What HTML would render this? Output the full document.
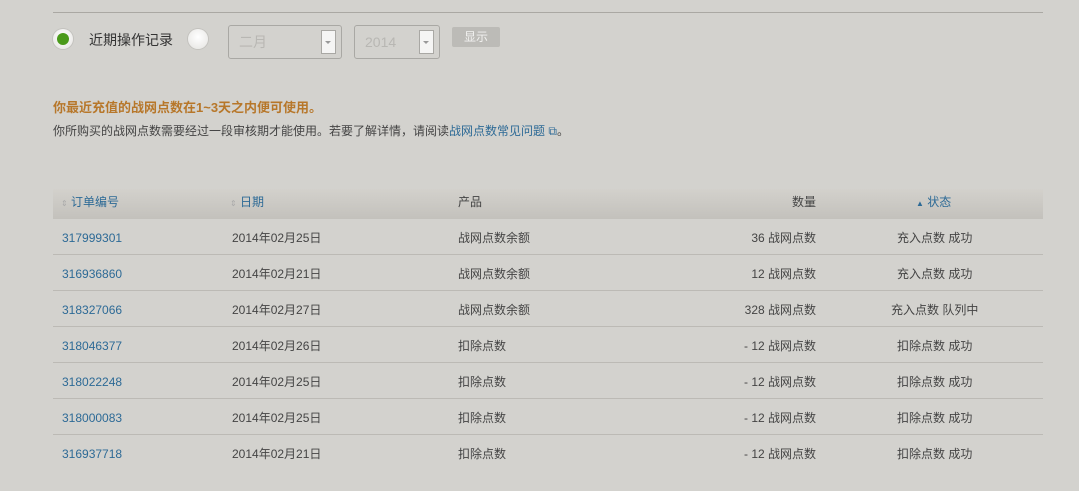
<!DOCTYPE html>
<html><head><meta charset="utf-8"><style>
body{margin:0;width:1079px;height:491px;background:#d3d2ce;font-family:"Liberation Sans","Noto Sans CJK SC",sans-serif;font-size:12px;color:#444;position:relative;overflow:hidden}
.a{position:absolute;white-space:nowrap;line-height:14px}
.a *{line-height:14px}
.hr{position:absolute;left:53px;top:12px;width:990px;height:1px;background:#aaa8a3}
.radio{position:absolute;width:20px;height:20px;border-radius:50%;background:radial-gradient(circle at 50% 40%,#fff,#e4e3e0);box-shadow:0 0 0 1px #c3c2be}
.dot{position:absolute;left:4px;top:4px;width:12px;height:12px;border-radius:50%;background:#4a9a1a}
.sel{position:absolute;height:34px;border:1px solid #a9a8a4;border-radius:3px;box-sizing:border-box;color:#b8b7b3;font-size:14px;line-height:32px;padding-left:10px}
.arr{position:absolute;right:5px;top:4px;width:15px;height:24px;background:#f5f5f4;border:1px solid #a9a8a4;box-sizing:border-box}
.arr:after{content:"";position:absolute;left:3px;top:10px;border-left:3px solid transparent;border-right:3px solid transparent;border-top:3px solid #999}
.th{position:absolute;left:53px;top:189px;width:990px;height:30px;background:linear-gradient(#d3d1cc,#c3c1bc)}
.row{position:absolute;left:53px;width:990px;height:1px;background:#bcbab5}
.lk{color:#2d6a96}
</style></head><body>
<div class="hr"></div>
<div class="radio" style="left:53px;top:29px"><div class="dot"></div></div>
<div class="a" style="left:89px;top:33px;font-size:14px;color:#333">近期操作记录</div>
<div class="radio" style="left:188px;top:29px"></div>
<div class="sel" style="left:228px;top:25px;width:114px">二月<div class="arr"></div></div>
<div class="sel" style="left:354px;top:25px;width:86px">2014<div class="arr"></div></div>
<div class="a" style="left:452px;top:27px;width:48px;height:20px;background:#bcbbb7;border-radius:2px;color:#f2f2f0;text-align:center;line-height:20px;font-size:12px">显示</div>
<div class="a" style="left:53px;top:101px;color:#b7772a;font-weight:bold;font-size:13px">你最近充值的战网点数在1~3天之内便可使用。</div>
<div class="a" style="left:53px;top:124px;color:#444">你所购买的战网点数需要经过一段审核期才能使用。若要了解详情，请阅读<span class="lk">战网点数常见问题</span> <span class="lk">⧉</span>。</div>
<div class="th"></div>
<div class="a lk" style="left:61px;top:195px"><span style="color:#aaa;font-size:8px">⇕</span> 订单编号</div>
<div class="a lk" style="left:230px;top:195px"><span style="color:#aaa;font-size:8px">⇕</span> 日期</div>
<div class="a" style="left:458px;top:195px">产品</div>
<div class="a" style="left:792px;top:195px">数量</div>
<div class="a lk" style="left:916px;top:195px"><span style="font-size:8px">▲</span> 状态</div>
<div class="a lk" style="left:62px;top:231px">317999301</div><div class="a" style="left:232px;top:231px">2014年02月25日</div><div class="a" style="left:458px;top:231px">战网点数余额</div><div class="a" style="right:263px;top:231px">36 战网点数</div><div class="a" style="left:897px;top:231px">充入点数 成功</div><div class="row" style="top:254px"></div>
<div class="a lk" style="left:62px;top:267px">316936860</div><div class="a" style="left:232px;top:267px">2014年02月21日</div><div class="a" style="left:458px;top:267px">战网点数余额</div><div class="a" style="right:263px;top:267px">12 战网点数</div><div class="a" style="left:897px;top:267px">充入点数 成功</div><div class="row" style="top:290px"></div>
<div class="a lk" style="left:62px;top:303px">318327066</div><div class="a" style="left:232px;top:303px">2014年02月27日</div><div class="a" style="left:458px;top:303px">战网点数余额</div><div class="a" style="right:263px;top:303px">328 战网点数</div><div class="a" style="left:891px;top:303px">充入点数 队列中</div><div class="row" style="top:326px"></div>
<div class="a lk" style="left:62px;top:339px">318046377</div><div class="a" style="left:232px;top:339px">2014年02月26日</div><div class="a" style="left:458px;top:339px">扣除点数</div><div class="a" style="right:263px;top:339px">- 12 战网点数</div><div class="a" style="left:897px;top:339px">扣除点数 成功</div><div class="row" style="top:362px"></div>
<div class="a lk" style="left:62px;top:375px">318022248</div><div class="a" style="left:232px;top:375px">2014年02月25日</div><div class="a" style="left:458px;top:375px">扣除点数</div><div class="a" style="right:263px;top:375px">- 12 战网点数</div><div class="a" style="left:897px;top:375px">扣除点数 成功</div><div class="row" style="top:398px"></div>
<div class="a lk" style="left:62px;top:411px">318000083</div><div class="a" style="left:232px;top:411px">2014年02月25日</div><div class="a" style="left:458px;top:411px">扣除点数</div><div class="a" style="right:263px;top:411px">- 12 战网点数</div><div class="a" style="left:897px;top:411px">扣除点数 成功</div><div class="row" style="top:434px"></div>
<div class="a lk" style="left:62px;top:447px">316937718</div><div class="a" style="left:232px;top:447px">2014年02月21日</div><div class="a" style="left:458px;top:447px">扣除点数</div><div class="a" style="right:263px;top:447px">- 12 战网点数</div><div class="a" style="left:897px;top:447px">扣除点数 成功</div>
</body></html>
